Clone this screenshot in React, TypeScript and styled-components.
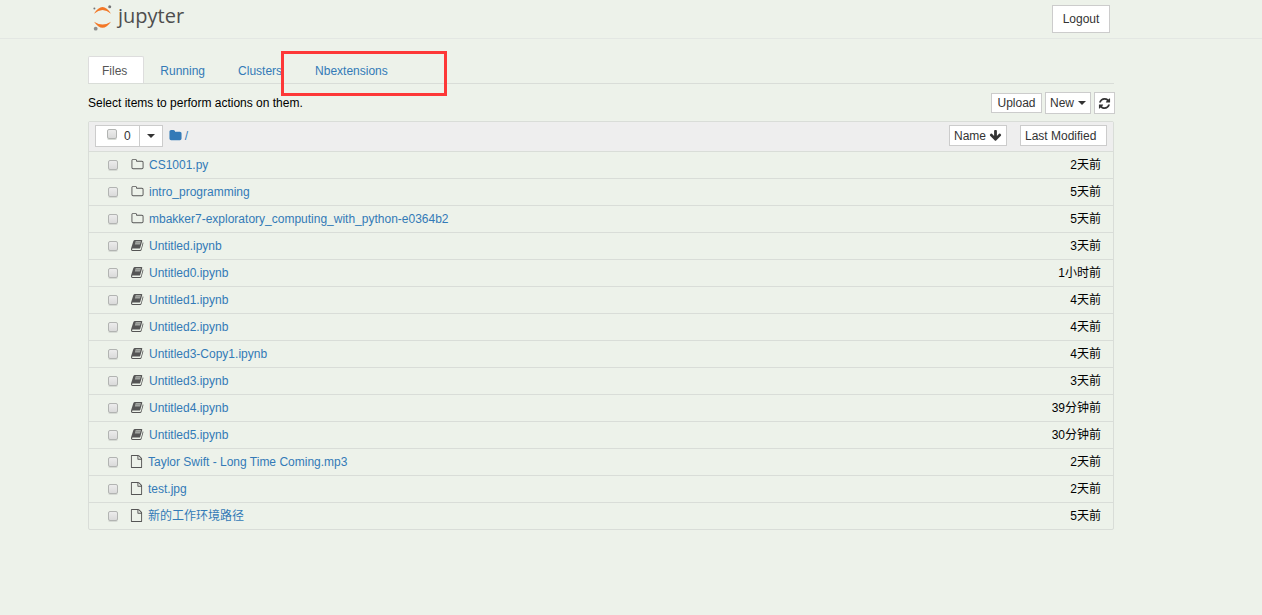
import React from "react";
import styled, { createGlobalStyle, css } from "styled-components";

const Global = createGlobalStyle`
  *, *::after { box-sizing: border-box; }
  body {
    margin: 0;
    min-height: 100vh;
    background: #edf2ea;
    color: #000;
    font: 12px/20px "Liberation Sans", "Noto Sans CJK SC", sans-serif;
  }
  a { color: #337ab7; text-decoration: none; }
  button, input { margin: 0; font: inherit; }
`;

const paths = {
  refresh: "M1639 1056q0 5-1 7-64 268-268 434.5t-478 166.5q-146 0-282.5-55t-243.5-157l-129 129q-19 19-45 19t-45-19-19-45v-448q0-26 19-45t45-19h448q26 0 45 19t19 45-19 45l-137 137q71 66 161 102t187 36q134 0 250-65t186-179q11-17 53-117 8-23 30-23h192q13 0 22.5 9.5t9.5 22.5zm25-800v448q0 26-19 45t-45 19h-448q-26 0-45-19t-19-45 19-45l138-138q-148-137-349-137-134 0-250 65t-186 179q-11 17-53 117-8 23-30 23h-199q-13 0-22.5-9.5t-9.5-22.5v-7q65-268 270-434.5t480-166.5q146 0 284 55.5t245 156.5l130-129q19-19 45-19t45 19 19 45z",
  arrow: "M1675 832q0 53-37 90l-651 652q-39 37-91 37-53 0-90-37l-651-652q-38-36-38-90 0-53 38-91l74-75q39-37 91-37 53 0 90 37l294 294v-704q0-52 38-90t90-38h128q52 0 90 38t38 90v704l294-294q37-37 90-37 52 0 91 37l75 75q37 39 37 91z",
  dir: "M1600 1312v-704q0-40-28-68t-68-28h-704q-40 0-68-28t-28-68v-64q0-40-28-68t-68-28h-320q-40 0-68 28t-28 68v960q0 40 28 68t68 28h1216q40 0 68-28t28-68zm128-704v704q0 92-66 158t-158 66h-1216q-92 0-158-66t-66-158v-960q0-92 66-158t158-66h320q92 0 158 66t66 158v32h672q92 0 158 66t66 158z",
  folder: "M1728 608v704q0 92-66 158t-158 66h-1216q-92 0-158-66t-66-158v-960q0-92 66-158t158-66h320q92 0 158 66t66 158v32h672q92 0 158 66t66 158z",
  file: "M1596 380q28 28 48 76t20 88v1152q0 40-28 68t-68 28h-1344q-40 0-68-28t-28-68v-1600q0-40 28-68t68-28h896q40 0 88 20t76 48zm-444-244v376h376q-10-29-22-41l-313-313q-12-12-41-22zm384 1528v-1024h-416q-40 0-68-28t-28-68v-416h-768v1536h1280z",
};
type IconName = keyof typeof paths;

const Svg = styled.svg<{ $size: number }>`
  display: block;
  flex: none;
  width: ${(p) => p.$size}px;
  height: ${(p) => p.$size}px;
  fill: currentColor;
`;
const Icon = ({ name, size = 13 }: { name: IconName; size?: number }) => (
  <Svg $size={size} viewBox="0 0 1792 1792" aria-hidden="true">
    <path d={paths[name]} />
  </Svg>
);
const BookIcon = () => (
  <Svg $size={13} viewBox="0 0 13 13" aria-hidden="true">
    <path d="M4 1H10.500Q11.500 1 11.200 2L9.200 8.900Q9 9.600 8 9.600H1.500Q.9 9.600 1.100 10.400Q1.300 11 2.200 11H8.800Q9.700 11 10 10.200L11.800 3.200Q12.600 3.600 12.300 4.500L10.500 10.900Q10.100 12 9.200 12H1.600Q.5 12 .1 10.900Q-.1 9.900.2 9L2.300 2.200Q2.800 1 4 1Z" />
    <path d="M4.700 2H10L8.900 5.400H3.800Z" fill="#a4a7a3" />
    <path d="M4.300 3.600H9.400" stroke="#858885" strokeWidth=".6" />
  </Svg>
);

const Caret = styled.span`
  border: 4px solid transparent;
  border-top-color: #333;
  border-bottom: 0;
`;

const Header = styled.header`
  display: flex;
  justify-content: space-between;
  align-items: flex-start;
  height: 39px;
  padding: 5px 152px 0 92px;
  border-bottom: 1px solid #e3e7e3;
`;
const Logo = styled.a`
  display: flex;
  gap: 4px;
  color: #4e4e4e;
  font: 500 20px/22px "Open Sans", sans-serif;
`;
const Planet = styled.svg`
  width: 22px;
  height: 26px;
`;

const control = css`
  display: flex;
  align-items: center;
  justify-content: center;
  border: 1px solid #ccc;
  border-radius: 0;
  background: #fff;
  color: #333;
  white-space: nowrap;
`;
const Button = styled.button<{ $h: number; $w: number }>`
  ${control}
  gap: 4px;
  height: ${(p) => p.$h}px;
  min-width: ${(p) => p.$w}px;
  padding: 0 3px;
`;
const SortButton = styled(Button)`
  justify-content: flex-start;
  gap: 3px;
  padding: 0 4px;
`;

const Main = styled.main`
  margin: 17px 148px 0 88px;
`;
const Tabs = styled.nav`
  display: flex;
  height: 28px;
  border-bottom: 1px solid #d9ddd8;
`;
const Tab = styled.a<{ $active?: boolean }>`
  height: 27px;
  padding: 4px 16px 0 13px;
  margin-right: 2px;
  border: 1px solid transparent;
  border-bottom: 0;
  border-radius: 2px 2px 0 0;
  ${(p) =>
    p.$active &&
    css`
      border-color: #ddd;
      background: #fff;
      color: #555;
    `}
`;
const TabMark = styled.span`
  position: relative;
  display: flex;
  &::after {
    content: "";
    position: absolute;
    left: -20px;
    top: -5px;
    width: 166px;
    height: 45px;
    border: 3px solid #fd3838;
    pointer-events: none;
  }
`;
const Toolbar = styled.div`
  display: flex;
  justify-content: space-between;
  height: 37px;
  padding-top: 8px;
`;
const Hint = styled.span`
  line-height: 22px;
`;
const Actions = styled.div`
  display: flex;
  align-items: center;
  gap: 3px;
  height: 22px;
  margin-right: -1px;
`;

const List = styled.section`
  border: 1px solid #d9ddd8;
  border-radius: 2px;
`;
const ListHeader = styled.div`
  display: flex;
  align-items: center;
  height: 29px;
  padding: 0 6px 2px;
  background: #eee;
`;
const Selector = styled.div`
  ${control}
  height: 22px;
`;
const SelectAll = styled.label`
  display: flex;
  align-items: center;
  gap: 7px;
  padding: 0 8px 0 11px;
`;
const SelectMenu = styled.button`
  display: flex;
  align-items: center;
  justify-content: center;
  width: 23px;
  height: 20px;
  padding: 0;
  border: 0;
  border-left: 1px solid #ccc;
  background: #fff;
`;
const Check = styled.input`
  appearance: none;
  flex: none;
  width: 10px;
  height: 10px;
  border: 1px solid #b2b4b2;
  border-radius: 2px;
  background: linear-gradient(#ececec, #dadada);
  box-shadow: 0 1px 0 #d6dad4;
  ${SelectAll} & {
    margin-bottom: 3px;
  }
`;
const Crumbs = styled.a`
  display: flex;
  align-items: center;
  gap: 3px;
  margin: 0 auto 0 6px;
`;
const Sorters = styled.div`
  display: flex;
  gap: 13px;
`;

const Rows = styled.ul`
  margin: 0;
  padding: 0;
  list-style: none;
`;
const Row = styled.li<{ $kind: string }>`
  display: flex;
  align-items: center;
  height: 27px;
  padding: 0 12px 0 19px;
  border-top: 1px solid #d9ddd8;
`;
const Glyph = styled.span<{ $file: boolean }>`
  margin: 0 5px 2px ${(p) => (p.$file ? 12 : 13)}px;
  color: #555;
`;
const When = styled.time`
  margin-left: auto;
`;

const files: [IconName | "book", string, string][] = [
  ["dir", "CS1001.py", "2天前"],
  ["dir", "intro_programming", "5天前"],
  ["dir", "mbakker7-exploratory_computing_with_python-e0364b2", "5天前"],
  ["book", "Untitled.ipynb", "3天前"],
  ["book", "Untitled0.ipynb", "1小时前"],
  ["book", "Untitled1.ipynb", "4天前"],
  ["book", "Untitled2.ipynb", "4天前"],
  ["book", "Untitled3-Copy1.ipynb", "4天前"],
  ["book", "Untitled3.ipynb", "3天前"],
  ["book", "Untitled4.ipynb", "39分钟前"],
  ["book", "Untitled5.ipynb", "30分钟前"],
  ["file", "Taylor Swift - Long Time Coming.mp3", "2天前"],
  ["file", "test.jpg", "2天前"],
  ["file", "新的工作环境路径", "5天前"],
];

export default function App() {
  return (
    <>
      <Global />
      <Header>
        <Logo href="#">
          <Planet viewBox="0 0 22 26" aria-hidden="true">
            <path d="M2 8.700Q10.500 -4.700 19 8.700Q10.500 1.300 2 8.700Z" fill="#f37726" />
            <path d="M2 16.700Q10.500 28.700 19 16.700Q10.500 22.300 2 16.700Z" fill="#f37726" />
            <circle cx="17.700" cy="1.700" r="1.500" fill="#767677" />
            <circle cx="2.400" cy="3.400" r="1" fill="#767677" />
            <circle cx="3.700" cy="23.700" r="1.900" fill="#8e8e8e" />
          </Planet>
          jupyter
        </Logo>
        <Button $h={28} $w={58}>Logout</Button>
      </Header>
      <Main>
        <Tabs>
          <Tab href="#" $active>Files</Tab>
          <Tab href="#">Running</Tab>
          <Tab href="#">Clusters</Tab>
          <TabMark><Tab href="#">Nbextensions</Tab></TabMark>
        </Tabs>
        <Toolbar>
          <Hint>Select items to perform actions on them.</Hint>
          <Actions>
            <Button $h={20} $w={51}>Upload</Button>
            <Button $h={22} $w={46}>New <Caret /></Button>
            <Button $h={22} $w={21} aria-label="Refresh"><Icon name="refresh" /></Button>
          </Actions>
        </Toolbar>
        <List>
          <ListHeader>
            <Selector>
              <SelectAll><Check type="checkbox" />0</SelectAll>
              <SelectMenu aria-label="Select by type"><Caret /></SelectMenu>
            </Selector>
            <Crumbs href="#"><Icon name="folder" />/</Crumbs>
            <Sorters>
              <SortButton $h={21} $w={58}>Name <Icon name="arrow" /></SortButton>
              <SortButton $h={21} $w={87}>Last Modified</SortButton>
            </Sorters>
          </ListHeader>
          <Rows>
            {files.map(([icon, name, when]) => (
              <Row key={name} $kind={icon}>
                <Check type="checkbox" aria-label={name} />
                <Glyph $file={icon === "file"}>{icon === "book" ? <BookIcon /> : <Icon name={icon} />}</Glyph>
                <a href="#">{name}</a>
                <When>{when}</When>
              </Row>
            ))}
          </Rows>
        </List>
      </Main>
    </>
  );
}
